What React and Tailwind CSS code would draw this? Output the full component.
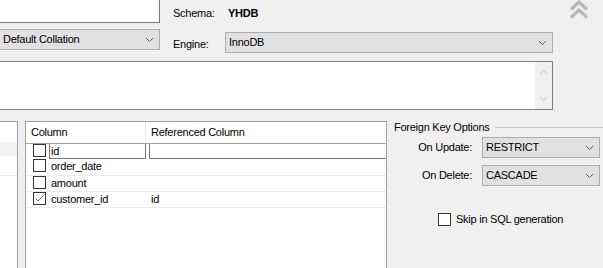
import React from "react";

const Chevron = ({ color = "#5a5a5a" }) => (
  <svg width="9" height="6" viewBox="0 0 9 6" className="shrink-0">
    <polyline points="1,1 4.5,4.5 8,1" fill="none" stroke={color} strokeWidth="1" />
  </svg>
);

const Select = ({ children, className = "" }) => (
  <div
    className={`flex h-[21px] items-center justify-between border border-[#adadad] bg-[#e1e1e1] pl-[3px] pr-[5px] text-black ${className}`}
  >
    <span>{children}</span>
    <Chevron />
  </div>
);

const Checkbox = ({ checked = false }) => (
  <div className="flex h-[13px] w-[13px] shrink-0 items-center justify-center border border-[#333333] bg-white">
    {checked && (
      <svg width="11" height="11" viewBox="0 0 11 11">
        <polyline points="1.5,5.5 4,8 9.5,2.5" fill="none" stroke="#6e6e6e" strokeWidth="1" />
      </svg>
    )}
  </div>
);

export default function App() {
  return (
    <div
      className="h-[268px] w-[603px] overflow-hidden bg-[#f0f0f0] text-[11px] tracking-[-0.25px] text-black"
      style={{ fontFamily: '"Liberation Sans", Arial, sans-serif' }}
    >
      {/* Row 1 */}
      <div className="flex h-[23px] items-start">
        <div className="h-[23px] w-[160px] border-b border-r border-[#7a7a7a] bg-white" />
        <div className="ml-[13px] mt-[5px] w-[55px]">Schema:</div>
        <div className="mt-[5px] font-bold">YHDB</div>
        <div className="ml-auto mr-[14px]">
          <svg width="20" height="19" viewBox="0 0 20 19">
            <polyline points="2,9.5 10,2 18,9.5" fill="none" stroke="#b8b8b8" strokeWidth="3.4" />
            <polyline points="2,17.5 10,10 18,17.5" fill="none" stroke="#b8b8b8" strokeWidth="3.4" />
          </svg>
        </div>
      </div>

      {/* Row 2 */}
      <div className="mt-[6px] flex h-[24px] items-start">
        <Select className="w-[160px] border-l-0">Default Collation</Select>
        <div className="ml-[13px] mt-[7px] w-[52px]">Engine:</div>
        <Select className="mt-[3px] w-[328px]">InnoDB</Select>
      </div>

      {/* Textarea */}
      <div className="mt-[8px] flex h-[49px] w-[553px] border border-l-0 border-[#828282] bg-white">
        <div className="flex-1" />
        <div className="flex w-[17px] flex-col items-center justify-between bg-[#f0f0f0] py-[7px]">
          <svg width="9" height="6" viewBox="0 0 9 6">
            <polyline points="1,5 4.5,1.5 8,5" fill="none" stroke="#c2c2c2" strokeWidth="1" />
          </svg>
          <svg width="9" height="6" viewBox="0 0 9 6">
            <polyline points="1,1 4.5,4.5 8,1" fill="none" stroke="#c2c2c2" strokeWidth="1" />
          </svg>
        </div>
      </div>

      {/* Bottom area */}
      <div className="mt-[11px] flex h-[147px] items-start">
        {/* Left panel */}
        <div className="h-[147px] w-[18px] border-r border-t border-[#a0a0a0] bg-white">
          <div className="h-[20px]" />
          <div className="h-[14px] bg-[#f3f3f3]" />
          <div className="h-[20px] border-b border-[#ececec]" />
        </div>

        {/* Middle grid */}
        <div className="ml-[7px] h-[147px] w-[362px] border-l border-r border-t border-[#a0a0a0] bg-white">
          <div className="flex h-[22px] items-center border-b border-[#a0a0a0]">
            <div className="flex h-full w-[120px] items-center border-r border-[#e5e5e5] pl-[5px]">Column</div>
            <div className="pl-[5px]">Referenced Column</div>
          </div>
          <div className="flex h-[15px] items-start pl-[7px]">
            <Checkbox />
            <div className="ml-[3px] flex h-[15px] w-[97px] items-center border-b border-l border-r border-[#7a7a7a] pl-[1px]">
              id
            </div>
            <div className="ml-[3px] h-[15px] flex-1 border-b border-l border-[#7a7a7a]" />
          </div>
          <div className="flex h-[17px] items-start border-b border-[#ececec] pl-[7px]">
            <Checkbox />
            <span className="ml-[5px] leading-[14px]">order_date</span>
          </div>
          <div className="flex h-[16px] items-start border-b border-[#ececec] pl-[7px]">
            <Checkbox />
            <span className="ml-[5px] leading-[14px]">amount</span>
          </div>
          <div className="flex h-[16px] items-start border-b border-[#ececec] pl-[7px]">
            <Checkbox checked />
            <span className="ml-[5px] w-[100px] leading-[14px]">customer_id</span>
            <span className="leading-[14px]">id</span>
          </div>
        </div>

        {/* Right panel */}
        <div className="flex-1 pl-[7px]">
          <div className="flex h-[13px] items-center">
            <span>Foreign Key Options</span>
            <div className="ml-[5px] h-px flex-1 bg-[#c8c8c8]" />
          </div>
          <div className="mt-[3px] flex items-center">
            <div className="w-[78px] text-right">On Update:</div>
            <Select className="ml-[10px] w-[118px]">RESTRICT</Select>
          </div>
          <div className="mt-[7px] flex items-center">
            <div className="w-[78px] text-right">On Delete:</div>
            <Select className="ml-[10px] w-[118px]">CASCADE</Select>
          </div>
          <div className="ml-[44px] mt-[25px] flex items-center">
            <Checkbox />
            <span className="ml-[5px]">Skip in SQL generation</span>
          </div>
        </div>
      </div>
    </div>
  );
}
